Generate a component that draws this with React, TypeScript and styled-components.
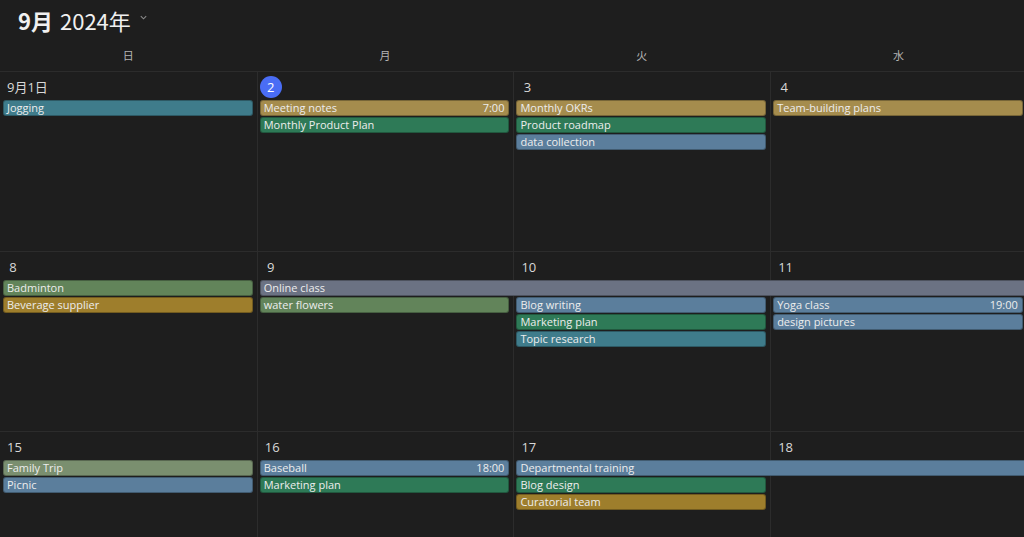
import React from "react";
import styled, { createGlobalStyle } from "styled-components";

const Global = createGlobalStyle`
  html, body { margin: 0; padding: 0; background: #1e1e1e; overflow: hidden; }
  #root { width: 1024px; height: 537px; overflow: hidden; }
  * { box-sizing: border-box; }
`;

const COLORS: Record<string, string> = {
  teal: "#3f7c8b",
  gold: "#a58c4d",
  green: "#2e7a57",
  blue: "#5b7e9c",
  olive: "#62845a",
  mustard: "#9e7e2c",
  slate: "#6b7283",
  sage: "#7a8f6f",
};

type Ev = { title: string; col: number; row: number; span?: number; color: string; time?: string };
type Week = { dates: string[]; today?: number; events: Ev[] };

const weeks: Week[] = [
  {
    dates: ["9月1日", "2", "3", "4", "5", "6", "7"],
    today: 1,
    events: [
      { title: "Jogging", col: 0, row: 0, color: "teal" },
      { title: "Meeting notes", col: 1, row: 0, color: "gold", time: "7:00" },
      { title: "Monthly Product Plan", col: 1, row: 1, color: "green" },
      { title: "Monthly OKRs", col: 2, row: 0, color: "gold" },
      { title: "Product roadmap", col: 2, row: 1, color: "green" },
      { title: "data collection", col: 2, row: 2, color: "blue" },
      { title: "Team-building plans", col: 3, row: 0, color: "gold" },
    ],
  },
  {
    dates: ["8", "9", "10", "11", "12", "13", "14"],
    events: [
      { title: "Badminton", col: 0, row: 0, color: "olive" },
      { title: "Beverage supplier", col: 0, row: 1, color: "mustard" },
      { title: "Online class", col: 1, row: 0, span: 5, color: "slate" },
      { title: "water flowers", col: 1, row: 1, color: "olive" },
      { title: "Blog writing", col: 2, row: 1, color: "blue" },
      { title: "Marketing plan", col: 2, row: 2, color: "green" },
      { title: "Topic research", col: 2, row: 3, color: "teal" },
      { title: "Yoga class", col: 3, row: 1, color: "blue", time: "19:00" },
      { title: "design pictures", col: 3, row: 2, color: "blue" },
    ],
  },
  {
    dates: ["15", "16", "17", "18", "19", "20", "21"],
    events: [
      { title: "Family Trip", col: 0, row: 0, color: "sage" },
      { title: "Picnic", col: 0, row: 1, color: "blue" },
      { title: "Baseball", col: 1, row: 0, color: "blue", time: "18:00" },
      { title: "Marketing plan", col: 1, row: 1, color: "green" },
      { title: "Departmental training", col: 2, row: 0, span: 4, color: "blue" },
      { title: "Blog design", col: 2, row: 1, color: "green" },
      { title: "Curatorial team", col: 2, row: 2, color: "mustard" },
    ],
  },
];

const dayNames = ["日", "月", "火", "水", "木", "金", "土"];

const Page = styled.div`
  width: 1024px;
  height: 537px;
  overflow: hidden;
  background: #1e1e1e;
  font-family: "Open Sans", "Noto Sans CJK JP", sans-serif;
  color: #d6d6d6;
`;

const Header = styled.div`
  height: 42px;
  display: flex;
  align-items: center;
  padding-left: 18px;
  gap: 6px;
`;

const Title = styled.div`
  font-family: "Noto Sans CJK JP", sans-serif;
  font-size: 22px;
  color: #f0f0f0;
  display: flex;
  align-items: baseline;
  gap: 7px;
  line-height: 1;
  margin-top: -3px;
`;

const Month = styled.span`
  font-weight: 700;
`;

const Year = styled.span`
  font-weight: 400;
`;

const Chevron = styled.svg`
  width: 9px;
  height: 9px;
  margin-top: -8px;
  margin-left: 2px;
`;

const Calendar = styled.div`
  width: 1797px;
`;

const DayNames = styled.div`
  display: grid;
  grid-template-columns: repeat(7, 1fr);
  height: 29px;
`;

const DayName = styled.div`
  font-family: "Noto Sans CJK JP", sans-serif;
  font-size: 11px;
  color: #b4b4b4;
  display: flex;
  align-items: center;
  justify-content: center;
  padding-bottom: 3px;
`;

const WeekRow = styled.div`
  display: grid;
  grid-template-columns: repeat(7, 1fr);
  grid-template-rows: 28px repeat(4, 17px) 1fr;
  height: 180px;
  border-top: 1px solid #2c2c2c;
`;

const DayCell = styled.div<{ $col: number }>`
  grid-row: 1 / -1;
  grid-column: ${(p) => p.$col + 1};
  border-left: ${(p) => (p.$col === 0 ? "none" : "1px solid #2c2c2c")};
`;

const DateLabel = styled.div<{ $col: number; $today?: boolean }>`
  grid-row: 1;
  grid-column: ${(p) => p.$col + 1};
  justify-self: start;
  align-self: center;
  margin-left: ${(p) => (p.$col === 0 ? 2 : 3)}px;
  margin-top: 1px;
  height: 22px;
  min-width: 22px;
  padding: 0 ${(p) => (p.$today ? 0 : 5)}px;
  border-radius: 11px;
  display: flex;
  align-items: center;
  justify-content: center;
  font-family: "Open Sans", "Noto Sans CJK JP", sans-serif;
  font-size: 13px;
  color: ${(p) => (p.$today ? "#ffffff" : "#d8d8d8")};
  background: ${(p) => (p.$today ? "#4a6df5" : "transparent")};
`;

const Bar = styled.div<{ $col: number; $row: number; $span: number; $bg: string }>`
  grid-row: ${(p) => p.$row + 2};
  grid-column: ${(p) => p.$col + 1} / span ${(p) => p.$span};
  align-self: start;
  height: 16px;
  margin-left: 3px;
  margin-right: 4px;
  background: ${(p) => p.$bg};
  border: 1px solid rgba(0, 0, 0, 0.28);
  border-radius: 3px;
  display: flex;
  align-items: center;
  justify-content: space-between;
  padding: 0 4px 0 3px;
  font-size: 11px;
  color: #ededed;
  line-height: 14px;
  white-space: nowrap;
  overflow: hidden;
`;

const BarTime = styled.span`
  color: #ededed;
`;

export default function App() {
  return (
    <Page>
      <Global />
      <Header>
        <Title>
          <Month>9月</Month>
          <Year>2024年</Year>
        </Title>
        <Chevron viewBox="0 0 10 10">
          <path d="M2 3.5 L5 6.5 L8 3.5" fill="none" stroke="#8a8a8a" strokeWidth="1.2" />
        </Chevron>
      </Header>
      <Calendar>
        <DayNames>
          {dayNames.map((d) => (
            <DayName key={d}>{d}</DayName>
          ))}
        </DayNames>
        {weeks.map((w, wi) => (
          <WeekRow key={wi}>
            {w.dates.map((_, ci) => (
              <DayCell key={"c" + ci} $col={ci} />
            ))}
            {w.dates.map((d, ci) => (
              <DateLabel key={"d" + ci} $col={ci} $today={w.today === ci}>
                {d}
              </DateLabel>
            ))}
            {w.events.map((e, ei) => (
              <Bar key={"e" + ei} $col={e.col} $row={e.row} $span={e.span ?? 1} $bg={COLORS[e.color]}>
                <span>{e.title}</span>
                {e.time && <BarTime>{e.time}</BarTime>}
              </Bar>
            ))}
          </WeekRow>
        ))}
      </Calendar>
    </Page>
  );
}
